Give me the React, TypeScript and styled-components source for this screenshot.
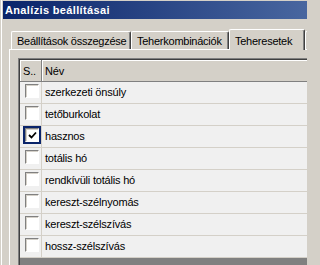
import React from "react";
import styled, { createGlobalStyle } from "styled-components";

const Global = createGlobalStyle`
  html, body { margin: 0; padding: 0; background: #d4d0c8; overflow: hidden; width: 307px; height: 265px; }
  body { font-family: "Liberation Sans", Arial, sans-serif; font-size: 11px; color: #000; }
`;

const Viewport = styled.div`
  width: 307px;
  height: 265px;
  overflow: hidden;
`;

const Window = styled.div`
  width: 420px;
  height: 265px;
  border-left: 1px solid #d4d0c8;
  box-shadow: inset 1px 0 0 #ffffff;
  padding: 1px 0 0 2px;
  box-sizing: border-box;
  background: #d4d0c8;
`;

const TitleBar = styled.div`
  height: 18px;
  background: linear-gradient(to right, #0a246a 0px, #a6caf0 760px);
  color: #ffffff;
  font-weight: bold;
  font-size: 11px;
  letter-spacing: 0.35px;
  line-height: 18px;
  padding-left: 2px;
  white-space: nowrap;
`;

const TabControl = styled.div`
  margin: 10px 0 0 6px;
`;

const TabStrip = styled.div`
  display: flex;
  align-items: flex-end;
  height: 20px;
  padding-left: 2px;
`;

const Tab = styled.div<{ $active?: boolean; $w: number }>`
  box-sizing: border-box;
  flex: none;
  width: ${(p) => p.$w}px;
  height: ${(p) => (p.$active ? 21 : 18)}px;
  margin-bottom: ${(p) => (p.$active ? -1 : 0)}px;
  position: relative;
  z-index: ${(p) => (p.$active ? 1 : 0)};
  background: #d4d0c8;
  border-top: 1px solid #ffffff;
  border-left: 1px solid #ffffff;
  border-right: 1px solid #404040;
  box-shadow: inset -1px 0 0 #808080;
  border-radius: 2px 2px 0 0;
  padding: ${(p) => (p.$active ? 4 : 2)}px 0 0 5px;
  line-height: 14px;
  letter-spacing: -0.25px;
  white-space: nowrap;
  overflow: hidden;
`;

const Panel = styled.div`
  border-top: 1px solid #ffffff;
  border-left: 1px solid #ffffff;
  padding: 8px 0 0 8px;
  background: #d4d0c8;
`;

const GridOuter = styled.div`
  border-top: 1px solid #808080;
  border-left: 1px solid #808080;
`;

const GridInner = styled.div`
  border-top: 1px solid #404040;
  border-left: 1px solid #404040;
  background: #808080;
  height: 260px;
`;

const Row = styled.div<{ $header?: boolean }>`
  display: grid;
  grid-template-columns: 22px 1fr;
  height: 22px;
  box-sizing: border-box;
  border-bottom: 1px solid ${(p) => (p.$header ? "#808080" : "#d4d0c8")};
  background: ${(p) => (p.$header ? "#d4d0c8" : "#f0f0f0")};
  letter-spacing: -0.2px;
`;

const HeadCell = styled.div`
  box-sizing: border-box;
  border-right: 1px solid #808080;
  box-shadow: inset 1px 1px 0 #ffffff;
  padding: 4px 0 0 3px;
  line-height: 14px;
  white-space: nowrap;
  overflow: hidden;
`;

const CheckCell = styled.div`
  box-sizing: border-box;
  border-right: 1px solid #d4d0c8;
  padding: 2px 0 0 5px;
`;

const NameCell = styled.div`
  padding: 0 0 0 3px;
  line-height: 21px;
  white-space: nowrap;
`;

const Box = styled.div<{ $focused?: boolean }>`
  box-sizing: border-box;
  width: 14px;
  height: 14px;
  background: #ffffff;
  border-top: 1px solid #808080;
  border-left: 1px solid #808080;
  border-right: 1px solid #ffffff;
  border-bottom: 1px solid #ffffff;
  box-shadow: inset 1px 1px 0 #d4d0c8;
  outline: ${(p) => (p.$focused ? "2px solid #0a246a" : "none")};
  display: flex;
  align-items: center;
  justify-content: center;
`;

const rows: { name: string; checked?: boolean }[] = [
  { name: "szerkezeti önsúly" },
  { name: "tetőburkolat" },
  { name: "hasznos", checked: true },
  { name: "totális hó" },
  { name: "rendkívüli totális hó" },
  { name: "kereszt-szélnyomás" },
  { name: "kereszt-szélszívás" },
  { name: "hossz-szélszívás" },
];

export default function App() {
  return (
    <>
      <Global />
      <Viewport>
        <Window>
          <TitleBar>Analízis beállításai</TitleBar>
          <TabControl>
            <TabStrip>
              <Tab $w={120}>Beállítások összegzése</Tab>
              <Tab $w={98}>Teherkombinációk</Tab>
              <Tab $w={76} $active>
                Teheresetek
              </Tab>
              <Tab $w={90}>&nbsp;</Tab>
            </TabStrip>
            <Panel>
              <GridOuter>
                <GridInner>
                  <Row $header>
                    <HeadCell>S..</HeadCell>
                    <HeadCell>Név</HeadCell>
                  </Row>
                  {rows.map((r) => (
                    <Row key={r.name}>
                      <CheckCell>
                        <Box $focused={r.checked}>
                          {r.checked && (
                            <svg width="9" height="9" viewBox="0 0 9 9">
                              <path d="M1 4 L3.5 6.5 L8 1.5" fill="none" stroke="#000" strokeWidth="1.8" />
                            </svg>
                          )}
                        </Box>
                      </CheckCell>
                      <NameCell>{r.name}</NameCell>
                    </Row>
                  ))}
                </GridInner>
              </GridOuter>
            </Panel>
          </TabControl>
        </Window>
      </Viewport>
    </>
  );
}
